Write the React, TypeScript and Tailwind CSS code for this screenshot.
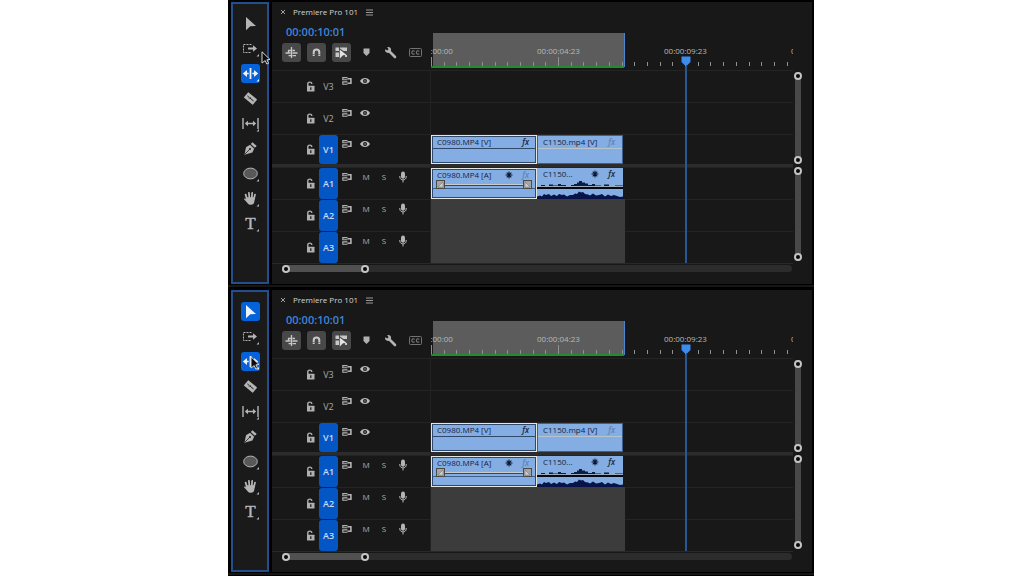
import type { ReactNode } from 'react';
import clsx from 'clsx';

type ToolId = 'select' | 'track' | 'ripple' | 'razor' | 'slip' | 'pen' | 'ellipse' | 'hand' | 'type';

type Track = {
  id: string;
  kind: 'video' | 'audio';
  targeted: boolean;
};

const VIDEO_TRACKS: Track[] = [
  { id: 'V3', kind: 'video', targeted: false },
  { id: 'V2', kind: 'video', targeted: false },
  { id: 'V1', kind: 'video', targeted: true },
];

const AUDIO_TRACKS: Track[] = [
  { id: 'A1', kind: 'audio', targeted: true },
  { id: 'A2', kind: 'audio', targeted: true },
  { id: 'A3', kind: 'audio', targeted: true },
];

const RULER_LABELS = ['00:00:00:00', '00:00:04:23', '00:00:09:23', '00:00:14:23'];
const MAJOR_STEP = 127;

const TOOLS: { id: ToolId; label: string; more?: boolean; icon: ReactNode }[] = [
  {
    id: 'select',
    label: 'Selection Tool',
    icon: <path d="M5 3 L15 12 L9.3 12.3 L5 16.3 Z" fill="currentColor" />,
  },
  {
    id: 'track',
    label: 'Track Select Forward Tool',
    more: true,
    icon: (
      <>
        <path d="M10.5 5.5 H2.5 V13.5 H10.5" fill="none" stroke="currentColor" strokeDasharray="2 1" />
        <path d="M7 8.5 H12 V6.3 L16 9.5 L12 12.7 V10.5 H7 Z" fill="currentColor" />
      </>
    ),
  },
  {
    id: 'ripple',
    label: 'Ripple Edit Tool',
    more: true,
    icon: (
      <path
        d="M8.6 4 H10.4 V15 H8.6 Z M1.8 9.5 L6 6 V8.7 H7.7 V10.3 H6 V13 Z M17.2 9.5 L13 6 V8.7 H11.3 V10.3 H13 V13 Z"
        fill="currentColor"
      />
    ),
  },
  {
    id: 'razor',
    label: 'Razor Tool',
    icon: (
      <g transform="rotate(40 9.5 9.5)">
        <rect x="3.7" y="6" width="11.6" height="7" rx="0.5" fill="currentColor" />
        <path d="M5.5 9.5 H7.5 M8.5 8.5 V10.5 M8.5 9.5 H13.5" stroke="#1a1a1a" strokeWidth="0.9" />
      </g>
    ),
  },
  {
    id: 'slip',
    label: 'Slip Tool',
    more: true,
    icon: (
      <>
        <path d="M2 4 V15 M17 4 V15 M5 9.5 H14" stroke="currentColor" strokeWidth="1.4" />
        <path d="M3.8 9.5 L7 6.8 V12.2 Z M15.2 9.5 L12 6.8 V12.2 Z" fill="currentColor" />
      </>
    ),
  },
  {
    id: 'pen',
    label: 'Pen Tool',
    icon: (
      <>
        <path d="M11.5 3.3 L15.7 7 L13.8 8.8 L9.8 5 Z" fill="currentColor" />
        <path d="M9 5.7 L13.2 9.7 L11.3 13.5 L3.5 15.7 L5 8.2 Z" fill="currentColor" />
        <path d="M4 15 L8.7 10.3" stroke="#1a1a1a" strokeWidth="0.8" />
        <circle cx="9" cy="10" r="1" fill="#1a1a1a" />
      </>
    ),
  },
  {
    id: 'ellipse',
    label: 'Ellipse Tool',
    more: true,
    icon: <ellipse cx="9.5" cy="9.5" rx="6.8" ry="5.4" fill="#585858" stroke="currentColor" />,
  },
  {
    id: 'hand',
    label: 'Hand Tool',
    more: true,
    icon: (
      <>
        <path
          d="M6.2 11 L4.6 5.6 M8.4 9 L7.9 3.8 M10.8 9 L11.2 3.8 M12.9 10 L14 5.6"
          stroke="currentColor"
          strokeWidth="1.8"
          strokeLinecap="round"
        />
        <path
          d="M5.4 8.2 H13.9 L13.4 12.5 C13 14.6 12 15.8 10 15.8 C8 15.8 7 14.8 6 13.4 L2.8 10 C3.3 8.9 4.6 9.4 5.6 10.4 Z"
          fill="currentColor"
        />
      </>
    ),
  },
  {
    id: 'type',
    label: 'Type Tool',
    more: true,
    icon: (
      <text x="9.5" y="15" textAnchor="middle" fontSize="17" fontFamily="'Liberation Serif', serif" fill="currentColor" stroke="currentColor" strokeWidth="0.5">
        T
      </text>
    ),
  },
];

function Pointer({ className }: { className: string }) {
  return (
    <svg viewBox="0 0 10 14" className={clsx('pointer-events-none absolute z-10 h-[14px] w-[10px]', className)}>
      <path d="M1 0.8 L9 8.5 L5.9 8.8 L7.6 12.3 L5.8 13 L4.2 9.6 L1 12 Z" fill="#0c0c0c" stroke="#d4d4d4" />
    </svg>
  );
}

function ToolStrip({ active, pointer }: { active: ToolId[]; pointer: string }) {
  return (
    <div className="relative flex w-[38px] shrink-0 flex-col items-center gap-[6px] border-2 border-[#23508c] bg-[#1a1a1a] pt-[10px]">
      {TOOLS.map((tool) => (
        <button
          key={tool.id}
          type="button"
          aria-label={tool.label}
          className={clsx(
            'h-[19px] w-[19px] rounded-[3px]',
            active.includes(tool.id) ? 'bg-[#0462dc] text-[#f2f2f2]' : 'text-[#b4b4b4]',
          )}
        >
          <svg viewBox="0 0 19 19" className="block h-[19px] w-[19px] overflow-visible">
            {tool.icon}
            {tool.more && <path d="M18 15 V17.5 H15.5 Z" fill="currentColor" />}
          </svg>
        </button>
      ))}
      <Pointer className={pointer} />
    </div>
  );
}

function LockIcon() {
  return (
    <svg viewBox="0 0 9 11" className="h-[11px] w-[9px] text-[#b0b0b0]">
      <path d="M1.8 5.5 V3 C1.8 0.5 5.8 0.5 5.8 3" fill="none" stroke="currentColor" strokeWidth="1.4" />
      <rect x="1" y="4.8" width="7.5" height="5.7" rx="0.5" fill="currentColor" />
      <path d="M4.8 6.3 V9" stroke="#1a1a1a" strokeWidth="1.2" />
    </svg>
  );
}

function SyncIcon() {
  return (
    <svg viewBox="0 0 10 8" className="h-[8px] w-[10px] text-[#b4b4b4]" fill="none" stroke="currentColor">
      <path d="M5.5 0.6 H0.8 V2.8 H5.5 M5.5 4.9 H0.8 V7.2 H5.5" strokeWidth="1.1" />
      <path d="M5.5 1.7 H8.9 V6.2 H5.5" strokeWidth="1.6" />
    </svg>
  );
}

function EyeIcon() {
  return (
    <svg viewBox="0 0 10 8" className="h-[8px] w-[10px] text-[#bcbcbc]">
      <path d="M0 4 C2 0 8 0 10 4 C8 8 2 8 0 4 Z" fill="currentColor" />
      <circle cx="5" cy="4" r="2" fill="#1a1a1a" />
      <circle cx="5" cy="4" r="0.7" fill="currentColor" />
    </svg>
  );
}

function MicIcon() {
  return (
    <svg viewBox="0 0 8 12" className="h-[12px] w-[8px] text-[#b4b4b4]">
      <rect x="2" y="0.5" width="4" height="7.3" rx="2" fill="currentColor" />
      <path d="M0.8 5 V6 C0.8 9.8 7.2 9.8 7.2 6 V5 M4 9 V11.5" fill="none" stroke="currentColor" />
    </svg>
  );
}

function TrackHeader({ track }: { track: Track }) {
  return (
    <div className="flex w-[159px] shrink-0 items-center pl-[34px]">
      <button type="button" aria-label={`Lock ${track.id}`} className="w-[9px]">
        <LockIcon />
      </button>
      <button
        type="button"
        className={clsx(
          'ml-[4px] flex w-[19px] items-center justify-center self-stretch rounded-[3px] text-[9px]',
          track.targeted ? 'bg-[#0456c4] font-semibold text-[#c4dcf8]' : 'font-medium text-[#a8a8a8]',
        )}
      >
        {track.id}
      </button>
      <div
        className={clsx(
          'ml-[4px] flex h-[12px] items-center self-start text-[8px] font-medium text-[#acacac]',
          track.targeted ? 'mt-[3px]' : 'mt-[4px]',
        )}
      >
        <button type="button" aria-label={`Sync ${track.id}`} className="w-[10px]">
          <SyncIcon />
        </button>
        {track.kind === 'video' ? (
          <button type="button" aria-label={`Toggle ${track.id} output`} className="ml-[8px] w-[10px]">
            <EyeIcon />
          </button>
        ) : (
          <>
            <button type="button" className="ml-[8px] w-[12px]">M</button>
            <button type="button" className="ml-[6px] w-[12px]">S</button>
            <button type="button" aria-label={`Record ${track.id}`} className="ml-[9px] w-[8px]">
              <MicIcon />
            </button>
          </>
        )}
      </div>
    </div>
  );
}

function Fx({ dim }: { dim?: boolean }) {
  return <span className={clsx('font-semibold italic', dim ? 'text-[#5f84b8]' : 'text-[#14243c]')}>fx</span>;
}

function Burst() {
  return (
    <svg viewBox="0 0 8 8" className="h-[8px] w-[8px]" stroke="#0c1830" strokeWidth="1.1">
      <path d="M4 0.5 V7.5 M0.5 4 H7.5 M1.7 1.7 L6.3 6.3 M6.3 1.7 L1.7 6.3" />
    </svg>
  );
}

function FadeHandle() {
  return (
    <svg viewBox="0 0 9 9" className="h-[9px] w-[9px]">
      <rect x="0.5" y="0.5" width="8" height="8" fill="#a4a4a4" stroke="#4a4a4a" />
      <path d="M2 7 L7 2 V7 Z" fill="#d4d4d4" stroke="#6a6a6a" strokeWidth="0.5" />
    </svg>
  );
}

function ClipTitle({ name, children }: { name: string; children: ReactNode }) {
  return (
    <div className="flex h-[11px] items-center pb-[2px] text-[8px] leading-[9px] font-medium text-[#14243c]">
      <span className="flex-1 whitespace-nowrap">{name}</span>
      {children}
    </div>
  );
}

function VideoLane() {
  return (
    <div className="flex">
      <div className="h-[29px] w-[106px] border-2 border-[#e6e6e0] bg-[#84ade4] outline-1 -outline-offset-2 outline-[#30486c]">
        <div className="border-b border-[#30486c] pr-[6px] pl-[4px]">
          <ClipTitle name="C0980.MP4 [V]">
            <Fx />
          </ClipTitle>
        </div>
      </div>
      <div className="h-[29px] w-[86px] border border-[#3f5f8e] bg-[#84ade4] pt-px">
        <div className="border-b border-[#b8c4cc] pr-[7px] pl-[5px]">
          <ClipTitle name="C1150.mp4 [V]">
            <Fx dim />
          </ClipTitle>
        </div>
      </div>
    </div>
  );
}

function Waveform() {
  return (
    <svg viewBox="0 0 86 19" preserveAspectRatio="none" className="block h-[19px] w-full">
      <path
        d="M0 6 H4 V5 H8 V6 H12 V4.500 H16 V5.500 H21 V4 H24 V5 H29 V6 H34 V5 H37 V4 H40 V2.500 H42 V1 H45 V2.500 H48 V3.500 H51 V5 H55 V4 H58 V5.500 H64 V6 H67 V4.500 H72 V6 H78 V5.500 H86 V6.500 H0 Z"
        fill="#0c1c44"
      />
      <path d="M0 6.500 H86" stroke="#d8dcd4" strokeWidth="0.6" />
      <rect y="7" width="86" height="2" fill="#060a14" />
      <path
        d="M0 19 V16.500 L3 15.500 L5 16.500 L7 14 L9 15 L12 14 L14 16 L17 14.500 L20 16 L22 14 L25 15 L27 14.500 L30 16.500 L33 15 L36 15 L38 13.500 L40 14 L42 11.500 L44 12.500 L46 12 L48 14 L51 14.500 L53 15.500 L56 13.500 L59 15.500 L62 15 L65 14 L68 16.500 L71 14.500 L74 16 L77 15 L80 16 L83 17 L86 16.500 V19 Z"
        fill="#081448"
      />
    </svg>
  );
}

function AudioLane() {
  return (
    <div className="flex">
      <div className="h-[31px] w-[106px] border-2 border-[#e6e6e0] bg-[#84ade4] outline-1 -outline-offset-2 outline-[#30486c]">
        <div className="pr-[6px] pl-[4px]">
          <ClipTitle name="C0980.MP4 [A]">
            <span className="mr-[9px]">
              <Burst />
            </span>
            <Fx dim />
          </ClipTitle>
        </div>
        <div className="flex h-[7px] items-center px-[3px]">
          <FadeHandle />
          <div className="h-[2px] flex-1 border-t border-[#c8ccc8] bg-[#30486c]" />
          <span className="-scale-x-100">
            <FadeHandle />
          </span>
        </div>
        <div className="border-t border-[#3f5f8e]" />
      </div>
      <div className="h-[31px] w-[86px] bg-[#84ade4] pt-px">
        <div className="pr-[8px] pl-[6px]">
          <ClipTitle name="C1150...">
            <span className="mr-[9px]">
              <Burst />
            </span>
            <Fx />
          </ClipTitle>
        </div>
        <Waveform />
      </div>
    </div>
  );
}

function TrackRow({ track }: { track: Track }) {
  const rendered = track.id === 'A2' || track.id === 'A3';
  return (
    <div className={clsx('flex border-t border-[#242424]', track.id === 'V1' ? 'h-[30px]' : 'h-[32px]')}>
      <TrackHeader track={track} />
      <div className="min-w-0 flex-1">
        {track.id === 'V1' && <VideoLane />}
        {track.id === 'A1' && <AudioLane />}
        {rendered && <div className="-mt-px h-[32px] w-[194px] bg-[#3c3c3c]" />}
      </div>
    </div>
  );
}

function Knob() {
  return <span className="block h-[8px] w-[8px] shrink-0 rounded-full border-2 border-[#c4c4c4] bg-[#080808]" />;
}

function VerticalBar({ className }: { className: string }) {
  return (
    <div className={clsx('flex w-[6px] flex-col items-center justify-between rounded-full bg-[#484848]', className)}>
      <Knob />
      <Knob />
    </div>
  );
}

function Ruler() {
  const ticks = Array.from({ length: 29 }, (_, i) => i);
  return (
    <div className="relative h-[66px] overflow-hidden">
      <div className="absolute top-[31px] left-[2px] h-[34px] w-[192px] border-r border-[#4c84d0] bg-[#5c5c5c]" />
      <div className="absolute bottom-0 left-0 h-[2px] w-[193px] bg-[#1f8c30]" />
      <div className="relative -ml-[63px] flex pt-[43px] text-[8px] leading-[12px] font-medium text-[#b8b8b8]">
        {RULER_LABELS.map((label) => (
          <span key={label} className="w-[127px] shrink-0 text-center">
            {label}
          </span>
        ))}
      </div>
      <svg width="362" height="9" className="absolute bottom-[2px] left-0">
        {ticks.map((i) => (
          <rect
            key={i}
            x={Math.round((i * MAJOR_STEP) / 10)}
            y={i % 10 === 0 ? 0 : 5}
            width="1"
            height={i % 10 === 0 ? 9 : 4}
            fill="#909090"
          />
        ))}
      </svg>
    </div>
  );
}

function Playhead() {
  return (
    <div className="pointer-events-none absolute top-[54px] bottom-0 left-[409px] flex w-[10px] flex-col items-center">
      <svg viewBox="0 0 10 10" className="h-[10px] w-[10px] shrink-0">
        <path d="M0.500 0.500 H9.500 V6 L6 9.500 H4 L0.500 6 Z" fill="#3b8cec" />
      </svg>
      <div className="w-[2px] flex-1 bg-[#285796]" />
    </div>
  );
}

function HeaderControls() {
  const pressed = 'flex h-[19px] w-[19px] items-center justify-center rounded-[3px] bg-[#484848] text-[#c8c8c8]';
  return (
    <div className="w-[159px] shrink-0">
      <div className="flex h-[20px] items-center pl-[8px] text-[#d4d4d4]">
        <button type="button" aria-label="Close sequence" className="w-[6px]">
          <svg viewBox="0 0 6 6" className="h-[6px] w-[6px]" stroke="#a0a0a0">
            <path d="M1 1 L5 5 M5 1 L1 5" />
          </svg>
        </button>
        <span className="ml-[7px] text-[8px] font-medium whitespace-nowrap">Premiere Pro 101</span>
        <button type="button" aria-label="Panel menu" className="ml-[8px] w-[7px]">
          <svg viewBox="0 0 7 7" className="h-[7px] w-[7px]" stroke="#a8a8a8">
            <path d="M0 1 H7 M0 3.500 H7 M0 6 H7" strokeWidth="0.9" />
          </svg>
        </button>
      </div>
      <div className="pl-[14px] text-[11px] leading-[20px] font-semibold text-[#3d86dc]">00:00:10:01</div>
      <div className="flex h-[20px] items-center pl-[10px]">
        <button type="button" aria-label="Insert as nest" className={pressed}>
          <svg viewBox="0 0 13 13" className="h-[13px] w-[13px]" stroke="currentColor" strokeWidth="1.300">
            <path d="M6.500 1 V12 M3.500 4 V6.500 M3 4.500 H6 M7.500 4.500 H10 M0.500 7 H5.500 M7.500 7 H12.500 M3.500 9.700 H6 M7.500 9.700 H11" />
          </svg>
        </button>
        <button type="button" aria-label="Snap" className={clsx(pressed, 'ml-[6px]')}>
          <svg viewBox="0 0 13 13" className="h-[13px] w-[13px]">
            <path d="M3.700 10 V6.300 C3.700 2.700 9.300 2.700 9.300 6.300 V10" fill="none" stroke="currentColor" strokeWidth="2" />
            <path d="M2 8.500 H11" stroke="#484848" strokeWidth="0.500" />
          </svg>
        </button>
        <button type="button" aria-label="Linked selection" className={clsx(pressed, 'ml-[6px]')}>
          <svg viewBox="0 0 13 13" className="h-[13px] w-[13px]">
            <path d="M0.500 1.500 H4 V5 H0.500 Z M5 1.500 H12 V5 H8.500 L5 2.500 Z M0.500 6.500 H4 V11 H0.500 Z M10 9 H12 V11 H10 Z" fill="currentColor" />
            <path d="M4.800 3.500 L11.500 9 L8 9.200 L4.800 12.500 Z" fill="#e4e4e4" />
          </svg>
        </button>
        <button type="button" aria-label="Add marker" className="ml-[12px] w-[7px]">
          <svg viewBox="0 0 7 8" className="h-[8px] w-[7px]">
            <path d="M0.500 0.500 H6.500 V5 L3.500 8 L0.500 5 Z" fill="#b0b0b0" />
          </svg>
        </button>
        <button type="button" aria-label="Timeline settings" className="ml-[14px] w-[13px]">
          <svg viewBox="0 0 13 13" className="h-[13px] w-[13px]">
            <path d="M5 5 L11 11" stroke="#b4b4b4" strokeWidth="2.600" strokeLinecap="round" />
            <path d="M1.200 3.200 L3.300 4.600 L4.600 3.300 L3.200 1.200 C5.500 0.400 7.600 2.300 7 4.600 C6.500 7 3.800 7.700 2.200 6.300 C1.200 5.500 0.900 4.300 1.200 3.200 Z" fill="#b4b4b4" />
          </svg>
        </button>
        <button type="button" aria-label="Captions" className="ml-[12px] w-[13px]">
          <svg viewBox="0 0 13 9" className="h-[9px] w-[13px]" fill="none" stroke="#727272">
            <rect x="0.500" y="0.500" width="12" height="8" rx="1" />
            <path
              d="M5.700 3.300 C4.900 2.400 2.800 2.500 2.800 4.500 C2.800 6.500 4.900 6.600 5.700 5.700 M10.300 3.300 C9.500 2.400 7.400 2.500 7.400 4.500 C7.400 6.500 9.500 6.600 10.300 5.700"
              strokeWidth="1.200"
            />
          </svg>
        </button>
      </div>
    </div>
  );
}

function TimelinePanel() {
  return (
    <div className="relative min-w-0 flex-1 bg-[#181818] pb-[12px]">
      <div className="flex h-[68px]">
        <HeaderControls />
        <div className="min-w-0 flex-1">
          <Ruler />
        </div>
        <div className="w-[19px] shrink-0" />
      </div>
      <div className="flex">
        <div className="min-w-0 flex-1">
          {VIDEO_TRACKS.map((track) => (
            <TrackRow key={track.id} track={track} />
          ))}
          <div className="h-[3px] bg-[#2c2c2c]" />
          <div className="border-b border-[#282828]">
            {AUDIO_TRACKS.map((track) => (
              <TrackRow key={track.id} track={track} />
            ))}
          </div>
        </div>
        <div className="flex w-[19px] shrink-0 flex-col pt-[2px] pl-[2px]">
          <VerticalBar className="h-[92px]" />
          <VerticalBar className="mt-[3px] h-[94px]" />
        </div>
      </div>
      <div className="mt-px mr-[20px] ml-[10px] h-[7px] rounded-full bg-[#2c2c2c]">
        <div className="flex h-[7px] w-[87px] items-center justify-between rounded-full bg-[#505050]">
          <Knob />
          <Knob />
        </div>
      </div>
      <div className="pointer-events-none absolute inset-x-0 top-0 bottom-[21px]">
        <div className="absolute top-[68px] bottom-0 left-[158px] w-px bg-[#222222]" />
        <Playhead />
      </div>
    </div>
  );
}

function Workspace({ active, pointer }: { active: ToolId[]; pointer: string }) {
  return (
    <section className="bg-black pt-[2px] pb-px">
      <div className="flex gap-[3px] pr-[2px] pl-[3px]">
        <ToolStrip active={active} pointer={pointer} />
        <TimelinePanel />
      </div>
      <div className="mt-px h-[2px] bg-[#161616]" />
    </section>
  );
}

export default function App() {
  return (
    <div className="bg-white pr-[210px] pl-[228px] font-['Open_Sans','Noto_Sans',sans-serif]">
      <Workspace active={['ripple']} pointer="top-[47px] left-[28px]" />
      <Workspace active={['select', 'ripple']} pointer="top-[64px] left-[17px]" />
    </div>
  );
}
